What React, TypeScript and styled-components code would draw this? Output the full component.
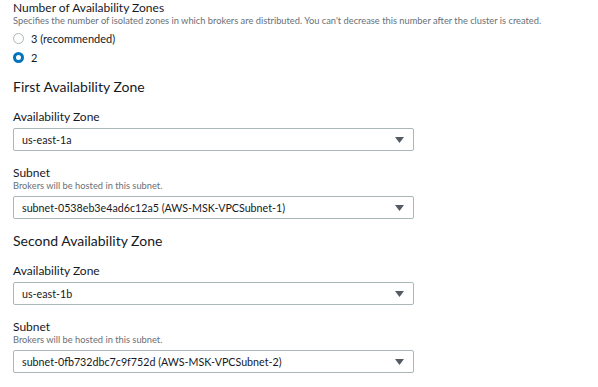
import styled, { createGlobalStyle } from "styled-components";

const GlobalStyle = createGlobalStyle`
  html, body {
    margin: 0;
    padding: 0;
    background: #ffffff;
  }
  body {
    font-family: Lato, "Open Sans", sans-serif;
    color: #16191f;
  }
`;

const zones = [
  {
    title: "First Availability Zone",
    az: "us-east-1a",
    subnet: "subnet-0538eb3e4ad6c12a5 (AWS-MSK-VPCSubnet-1)",
  },
  {
    title: "Second Availability Zone",
    az: "us-east-1b",
    subnet: "subnet-0fb732dbc7c9f752d (AWS-MSK-VPCSubnet-2)",
  },
];

const Caret = () => (
  <svg width="9" height="6" viewBox="0 0 9 6">
    <path d="M0 0 H9 L4.5 6 Z" fill="#545b64" />
  </svg>
);

const Select = ({ value }: { value: string }) => (
  <SelectBox>
    <SelectValue>{value}</SelectValue>
    <Caret />
  </SelectBox>
);

const App = () => {
  return (
    <Page>
      <GlobalStyle />
      <Field $gap={13}>
        <Label>Number of Availability Zones</Label>
        <Hint>
          Specifies the number of isolated zones in which brokers are
          distributed. You can't decrease this number after the cluster is
          created.
        </Hint>
        <RadioList>
          <RadioRow>
            <Radio $checked={false} />
            <RadioText>3 (recommended)</RadioText>
          </RadioRow>
          <RadioRow>
            <Radio $checked />
            <RadioText>2</RadioText>
          </RadioRow>
        </RadioList>
      </Field>
      {zones.map((zone) => (
        <Section key={zone.title}>
          <Heading>{zone.title}</Heading>
          <Field $gap={15}>
            <Label>Availability Zone</Label>
            <Select value={zone.az} />
          </Field>
          <Field $gap={13}>
            <Label>Subnet</Label>
            <Hint>Brokers will be hosted in this subnet.</Hint>
            <Select value={zone.subnet} />
          </Field>
        </Section>
      ))}
    </Page>
  );
};

const Page = styled.div`
  padding: 1px 13px 0 13px;
  display: flex;
  flex-direction: column;
`;

const Field = styled.div<{ $gap: number }>`
  display: flex;
  flex-direction: column;
  margin-bottom: ${({ $gap }) => $gap}px;
`;

const Section = styled.div`
  display: flex;
  flex-direction: column;
`;

const Label = styled.div`
  font-size: 12px;
  line-height: 14px;
  color: #16191f;
`;

const Hint = styled.div`
  font-size: 9.3px;
  line-height: 12px;
  color: #687078;
  white-space: nowrap;
`;

const RadioList = styled.div`
  display: flex;
  flex-direction: column;
  gap: 3px;
  margin-top: 3px;
`;

const RadioRow = styled.div`
  display: flex;
  align-items: center;
  height: 16px;
  gap: 7px;
`;

const Radio = styled.span<{ $checked: boolean }>`
  box-sizing: border-box;
  width: 11px;
  height: 11px;
  border-radius: 50%;
  border: ${({ $checked }) =>
    $checked ? "3.5px solid #0073bb" : "1px solid #aab7b8"};
  background: #ffffff;
`;

const RadioText = styled.span`
  font-size: 11px;
  color: #16191f;
`;

const Heading = styled.div`
  font-size: 14px;
  line-height: 18px;
  margin-bottom: 14px;
  color: #16191f;
`;

const SelectBox = styled.div`
  box-sizing: border-box;
  width: 401px;
  height: 23px;
  margin-top: 4px;
  border: 1px solid #aab7b8;
  border-radius: 2px;
  display: flex;
  align-items: center;
  justify-content: space-between;
  padding: 0 9px 0 8px;
`;

const SelectValue = styled.span`
  font-size: 10.7px;
  color: #16191f;
`;

export default App;
